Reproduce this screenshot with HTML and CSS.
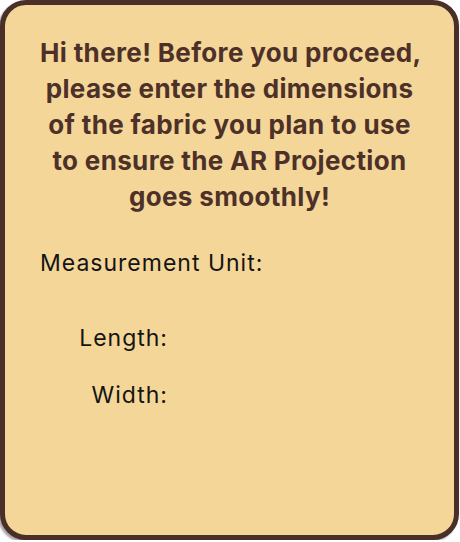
FILE: index.html
```html
<!DOCTYPE html>
<html>
<head>
<meta charset="utf-8">
<link rel="stylesheet" href="styles.css">
</head>
<body>
<div class="card">
  <h1 class="intro">Hi there! Before you proceed,<br>please enter the dimensions<br>of the fabric you plan to use<br>to ensure the AR Projection<br>goes smoothly!</h1>
  <div class="field unit">Measurement Unit:</div>
  <div class="dims">
    <div class="field dim">Length:</div>
    <div class="field dim">Width:</div>
  </div>
</div>
</body>
</html>
```
FILE: styles.css
```css
html, body {
  margin: 0;
  padding: 0;
  background: #ffffff;
}
.card {
  box-sizing: border-box;
  width: 459px;
  height: 540px;
  margin: 0;
  background: #f3d698;
  border: 5px solid #4a2f28;
  border-radius: 26px;
  box-shadow: -2px 2px 2px rgba(0,0,0,0.35);
  font-family: Inter, "Noto Sans", sans-serif;
  padding: 30px 35px 0 35px;
}
.intro {
  margin: 0;
  text-align: center;
  white-space: nowrap;
  font-size: 26px;
  line-height: 36px;
  font-weight: 700;
  letter-spacing: 0.35px;
  color: #4d3129;
}
.field {
  font-size: 23px;
  font-weight: 400;
  letter-spacing: 1px;
  line-height: 30px;
  color: #141414;
}
.unit {
  margin-top: 33px;
}
.dims {
  margin-top: 45px;
  width: 128px;
  display: flex;
  flex-direction: column;
  align-items: flex-end;
  gap: 27px;
}
```
